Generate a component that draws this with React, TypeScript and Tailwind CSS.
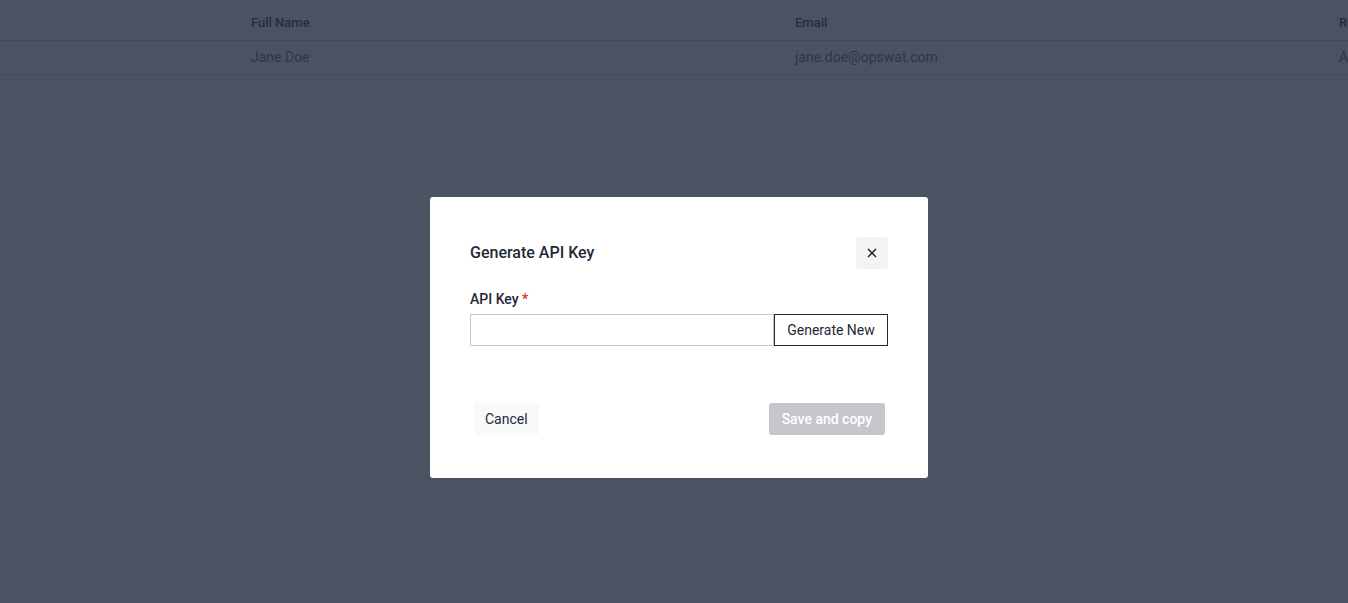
import React from 'react';

const font = { fontFamily: 'Roboto, "Liberation Sans", sans-serif' };

export default function App() {
  return (
    <div className="relative h-[603px] w-[1348px] overflow-hidden bg-[#4b5262]" style={font}>
      {/* table behind the overlay */}
      <div className="w-full">
        <div className="flex h-[41px] items-center border-b border-[#444b5a] pt-[6px] text-[13px] font-medium text-[#262d3c]">
          <div className="w-[251px] shrink-0" />
          <div className="w-[544px] shrink-0">Full Name</div>
          <div className="w-[544px] shrink-0">Email</div>
          <div className="shrink-0 whitespace-nowrap">Role</div>
        </div>
        <div className="flex h-[34px] items-center border-b border-[#444b5a] text-[14px] text-[#2f3647]">
          <div className="w-[251px] shrink-0" />
          <div className="w-[544px] shrink-0">Jane Doe</div>
          <div className="w-[544px] shrink-0">jane.doe@opswat.com</div>
          <div className="shrink-0 whitespace-nowrap">Admin</div>
        </div>
      </div>

      {/* dialog */}
      <div className="absolute left-[430px] top-[197px] h-[281px] w-[498px] rounded-[3px] bg-white px-10 pt-10">
        <div className="flex items-center justify-between">
          <h2 className="text-[16px] font-medium text-[#1f2937]">Generate API Key</h2>
          <button className="flex h-8 w-8 items-center justify-center rounded-[3px] bg-[#f3f3f4] text-[#1f2937]">
            <svg width="10" height="10" viewBox="0 0 10 10" fill="none" stroke="currentColor" strokeWidth="1.5">
              <path d="M1 1l8 8M9 1l-8 8" />
            </svg>
          </button>
        </div>
        <div className="mt-[20px] text-[14px] font-medium text-[#1f2937]">
          API Key <span className="text-[#d0321e]">*</span>
        </div>
        <div className="mt-[4px] flex h-8">
          <input className="h-8 flex-1 border border-[#c6c7cb] px-2 text-[14px] outline-none" />
          <button className="h-8 w-[114px] border border-[#1f2937] text-[14px] text-[#1f2937]">Generate New</button>
        </div>
        <div className="mt-[57px] flex items-center justify-between pl-1 pr-[3px]">
          <button className="h-8 rounded-[3px] bg-[#f8f9fa] px-[11px] text-[14px] text-[#1f2937]">Cancel</button>
          <button className="h-8 rounded-[3px] bg-[#c5c6ca] px-[13px] text-[14px] font-medium text-white">Save and copy</button>
        </div>
      </div>
    </div>
  );
}
